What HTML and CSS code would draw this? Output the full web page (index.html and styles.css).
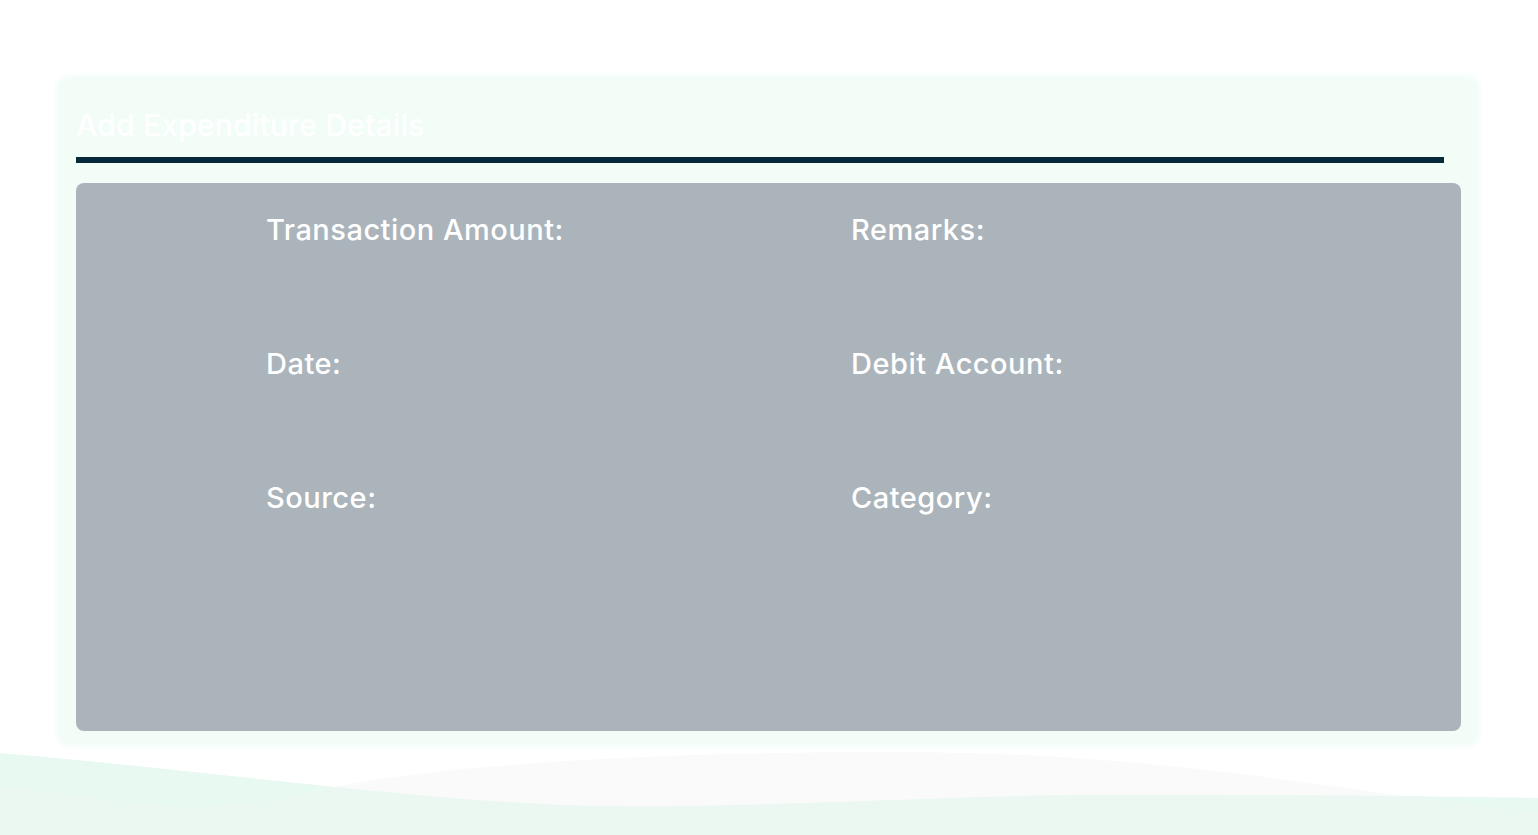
FILE: index.html
```html
<!DOCTYPE html>
<html lang="en">
<head>
<meta charset="utf-8">
<title>Add Expenditure Details</title>
<link rel="stylesheet" href="styles.css">
</head>
<body>
<div class="page">
  <section class="card">
    <h1 class="title">Add Expenditure Details</h1>
    <div class="rule"></div>
    <div class="panel">
      <div class="field">Transaction Amount:</div>
      <div class="field">Remarks:</div>
      <div class="field">Date:</div>
      <div class="field">Debit Account:</div>
      <div class="field">Source:</div>
      <div class="field">Category:</div>
    </div>
  </section>
  <svg class="waves" viewBox="0 745 1538 90" preserveAspectRatio="none" aria-hidden="true">
    <defs>
      <clipPath id="waveA">
        <path d="M0 753 C 200 770, 400 798, 560 805 C 700 810, 850 800, 1060 795 C 1300 794, 1450 797, 1538 798 L1538 835 L0 835 Z"/>
      </clipPath>
    </defs>
    <path d="M0 753 C 200 770, 400 798, 560 805 C 700 810, 850 800, 1060 795 C 1300 794, 1450 797, 1538 798 L1538 835 L0 835 Z" fill="#e8f9f1"/>
    <path d="M0 786 C 80 795, 140 808, 200 807 C 260 806, 300 795, 340 786 C 420 770, 600 752, 900 752 C 1050 753, 1150 763, 1250 775 C 1350 788, 1450 803, 1538 813 L1538 835 L0 835 Z" fill="#fafafa"/>
    <path clip-path="url(#waveA)" d="M0 786 C 80 795, 140 808, 200 807 C 260 806, 300 795, 340 786 C 420 770, 600 752, 900 752 C 1050 753, 1150 763, 1250 775 C 1350 788, 1450 803, 1538 813 L1538 835 L0 835 Z" fill="#ebf8f1"/>
  </svg>
</div>
</body>
</html>
```
FILE: styles.css
```css
html, body {
  margin: 0;
  padding: 0;
  background: #ffffff;
}
body {
  font-family: Inter, "Open Sans", "Liberation Sans", sans-serif;
  width: 1538px;
  height: 835px;
  overflow: hidden;
}
.page {
  position: relative;
  height: 835px;
  padding-top: 77px;
  box-sizing: border-box;
}
.card {
  margin-left: 58px;
  width: 1420px;
  height: 668px;
  box-sizing: border-box;
  background: #f2fdf8;
  border-radius: 12px;
  box-shadow: 0 0 6px 2px #f4fcf8;
  padding: 27px 17px 14px 18px;
  display: flex;
  flex-direction: column;
}
.title {
  margin: 0;
  font-size: 30px;
  font-weight: 500;
  line-height: 42px;
  color: #ffffff;
  letter-spacing: 0.2px;
}
.rule {
  height: 6px;
  background: #072a3a;
  margin: 11px 17px 0 0;
}
.panel {
  margin-top: 20px;
  height: 548px;
  background: #abb4ba;
  border-radius: 8px;
  box-sizing: border-box;
  padding: 28px 0 0 190px;
  display: grid;
  grid-template-columns: 585px 585px;
  grid-auto-rows: 134px;
  align-content: start;
}
.field {
  color: #ffffff;
  font-size: 29px;
  font-weight: 500;
  line-height: 38px;
  height: 38px;
  letter-spacing: 0.5px;
}
.waves {
  position: absolute;
  left: 0;
  bottom: 0;
  width: 1538px;
  height: 90px;
  display: block;
}
```
